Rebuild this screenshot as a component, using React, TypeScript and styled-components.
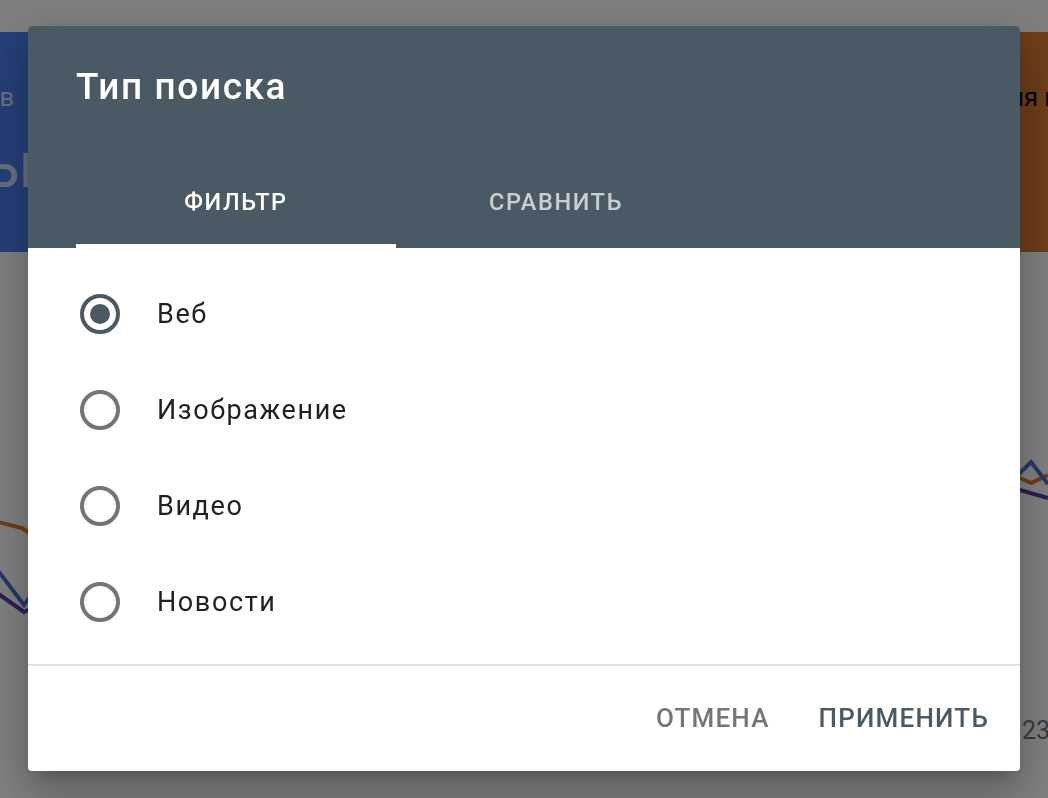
import React, { useState } from "react";
import styled, { createGlobalStyle } from "styled-components";

const GlobalStyle = createGlobalStyle`
  html, body { margin: 0; padding: 0; }
  body {
    font-family: Roboto, "Noto Sans", "Liberation Sans", sans-serif;
    background: #ffffff;
    overflow: hidden;
  }
  * { box-sizing: border-box; }
`;

const Page = styled.div`
  width: 1048px;
  height: 798px;
  background: #ffffff;
  overflow: hidden;
  display: flex;
  flex-direction: column;
`;

const CardsRow = styled.div`
  display: flex;
  gap: 39px;
  padding-top: 32px;
  margin-left: -170px;
  width: 1403px;
  flex: none;
`;

const Card = styled.div<{ $bg: string; $fg: string }>`
  flex: 1;
  height: 220px;
  background: ${(p) => p.$bg};
  color: ${(p) => p.$fg};
  padding: 50px 24px 0;
  display: flex;
  flex-direction: column;
  gap: 22px;
  white-space: nowrap;
`;

const CardLabel = styled.div`
  font-size: 25.5px;
  line-height: 30px;
`;

const CardValue = styled.div`
  font-size: 64px;
  line-height: 64px;
`;

const ChartArea = styled.div`
  margin-top: 186px;
  display: flex;
  flex-direction: column;
`;

const AxisRow = styled.div`
  display: flex;
  justify-content: flex-end;
  margin-right: -2px;
  margin-top: 78px;
  font-size: 25px;
  color: #757575;
`;

const Overlay = styled.div`
  position: fixed;
  inset: 0;
  background: rgba(0, 0, 0, 0.5);
  display: flex;
  align-items: center;
  justify-content: center;
`;

const Dialog = styled.div`
  width: 992px;
  height: 745px;
  margin-top: -2px;
  background: #ffffff;
  border-radius: 4px;
  overflow: hidden;
  display: flex;
  flex-direction: column;
  box-shadow: 0 11px 15px -7px rgba(0, 0, 0, 0.2),
    0 24px 38px 3px rgba(0, 0, 0, 0.14), 0 9px 46px 8px rgba(0, 0, 0, 0.12);
`;

const Header = styled.div`
  background: #4a5a64;
  padding: 41px 48px 0;
  display: flex;
  flex-direction: column;
`;

const Title = styled.h2`
  margin: 0;
  font-size: 37px;
  line-height: 40px;
  font-weight: 500;
  letter-spacing: 1.6px;
  color: #ffffff;
`;

const Tabs = styled.div`
  display: flex;
  margin-top: 45px;
`;

const Tab = styled.button<{ $active: boolean }>`
  width: 320px;
  height: 96px;
  border: 0;
  padding: 8px 0 0;
  background: transparent;
  font-family: inherit;
  font-size: 23.5px;
  font-weight: 500;
  letter-spacing: 1.6px;
  text-transform: uppercase;
  color: ${(p) => (p.$active ? "#ffffff" : "rgba(255,255,255,0.7)")};
  border-bottom: 4px solid ${(p) => (p.$active ? "#ffffff" : "transparent")};
  cursor: pointer;
`;

const Body = styled.div`
  flex: 1;
  padding: 18px 0 0 52px;
  display: flex;
  flex-direction: column;
`;

const Option = styled.label`
  height: 96px;
  display: flex;
  align-items: center;
  gap: 37px;
  font-size: 27px;
  letter-spacing: 1.6px;
  color: #212121;
  cursor: pointer;
`;

const RadioOuter = styled.span<{ $checked: boolean }>`
  width: 40px;
  height: 40px;
  border-radius: 50%;
  border: 4px solid ${(p) => (p.$checked ? "#4a5a64" : "#757575")};
  display: flex;
  align-items: center;
  justify-content: center;
  flex: none;
`;

const RadioDot = styled.span`
  width: 20px;
  height: 20px;
  border-radius: 50%;
  background: #4a5a64;
`;

const Divider = styled.div`
  height: 2px;
  background: #e0e0e0;
`;

const Footer = styled.div`
  height: 105px;
  display: flex;
  align-items: center;
  justify-content: flex-end;
  gap: 49px;
  padding-right: 31px;
`;

const TextButton = styled.button<{ $primary?: boolean }>`
  border: 0;
  background: transparent;
  padding: 0;
  font-family: inherit;
  font-size: 26px;
  font-weight: 500;
  letter-spacing: 1.2px;
  text-transform: uppercase;
  color: ${(p) => (p.$primary ? "#4a5a64" : "#757575")};
  cursor: pointer;
`;

const options = ["Веб", "Изображение", "Видео", "Новости"];

export default function App() {
  const [tab, setTab] = useState(0);
  const [selected, setSelected] = useState(0);
  return (
    <>
      <GlobalStyle />
      <Page>
        <CardsRow>
          <Card $bg="#4a7ef0" $fg="rgba(255,255,255,0.75)">
            <CardLabel>Всего кликов</CardLabel>
            <CardValue>1,2 тыс.</CardValue>
          </Card>
          <Card $bg="#ffffff" $fg="#5f6368">
            <CardLabel>Всего показов</CardLabel>
            <CardValue>41 тыс.</CardValue>
          </Card>
          <Card $bg="#ffffff" $fg="#5f6368">
            <CardLabel>Средний CTR</CardLabel>
            <CardValue>2,9%</CardValue>
          </Card>
          <Card $bg="#dc7c33" $fg="#000000">
            <CardLabel>Средняя позиция</CardLabel>
            <CardValue>5,6</CardValue>
          </Card>
        </CardsRow>
        <ChartArea>
          <svg width="1048" height="200" viewBox="0 0 1048 200">
            <polyline
              points="-10,82 22,90 40,102 1000,45 1020,40 1031,45 1048,37"
              fill="none"
              stroke="#e37a26"
              strokeWidth="4"
            />
            <polyline
              points="-10,122 24,167 50,132 1000,55 1031,24 1048,46"
              fill="none"
              stroke="#4a6fd0"
              strokeWidth="4"
            />
            <polyline
              points="-10,150 24,174 50,162 1000,50 1020,52 1048,60"
              fill="none"
              stroke="#5a3aa8"
              strokeWidth="4"
            />
          </svg>
          <AxisRow>23</AxisRow>
        </ChartArea>
      </Page>
      <Overlay>
        <Dialog role="dialog">
          <Header>
            <Title>Тип поиска</Title>
            <Tabs>
              {["Фильтр", "Сравнить"].map((t, i) => (
                <Tab key={t} $active={tab === i} onClick={() => setTab(i)}>
                  {t}
                </Tab>
              ))}
            </Tabs>
          </Header>
          <Body>
            {options.map((o, i) => (
              <Option key={o} onClick={() => setSelected(i)}>
                <RadioOuter $checked={selected === i}>
                  {selected === i && <RadioDot />}
                </RadioOuter>
                {o}
              </Option>
            ))}
          </Body>
          <Divider />
          <Footer>
            <TextButton>Отмена</TextButton>
            <TextButton $primary>Применить</TextButton>
          </Footer>
        </Dialog>
      </Overlay>
    </>
  );
}
